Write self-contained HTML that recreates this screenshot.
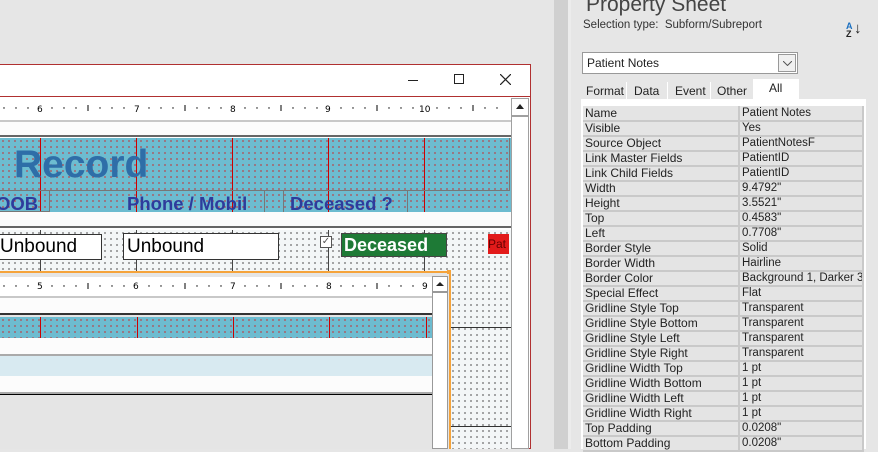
<!DOCTYPE html>
<html><head><meta charset="utf-8"><style>
*{margin:0;padding:0;box-sizing:border-box}
body{width:878px;height:449px;overflow:hidden;background:#e6e6e6;position:relative;font-family:"Liberation Sans",sans-serif}
.a{position:absolute}
.dotg{background-color:#f3f6f7;background-image:radial-gradient(#3a3a3a 0.6px,transparent 0.9px);background-size:6px 6px}
.dotr{background-color:#6dbcd0;background-image:radial-gradient(#d02020 0.6px,transparent 0.9px);background-size:6px 6px}
.vl{position:absolute;top:0;bottom:0;width:1px}
.ruler{background:#fff;font-size:9px;color:#000;border-bottom:2px solid #c8c8c8}
.ps{font-family:"Liberation Sans",sans-serif;font-size:12px;color:#222}
table{border-collapse:collapse}
td{height:15px;border:2px solid #c9c9c9;border-top:0;border-left:0;padding:0 2px;background:#e4e4e4;white-space:nowrap;overflow:hidden;line-height:13px}
td+td{padding:0 0 0 2px;font-size:11.5px}
</style></head><body>
<div class="a" style="left:0;top:64px;width:531px;height:385px;border:1px solid #b03030;border-left:0;background:#fff"></div>
<div class="a" style="left:0;top:65px;width:530px;height:32px;background:#fff;border-bottom:1px solid #b03030"></div>
<div class="a" style="left:408px;top:80px;width:10px;height:1px;background:#222"></div>
<div class="a" style="left:454px;top:74px;width:10px;height:10px;border:1px solid #222"></div>
<svg class="a" style="left:500px;top:74px" width="11" height="11"><path d="M0 0L11 11M11 0L0 11" stroke="#222" stroke-width="1.2"/></svg>
<div class="a ruler" style="left:0;top:98px;width:511px;height:24px">
<svg width="511" height="22" class="a" style="left:0;top:0">
<g fill="#000" font-size="9" font-family="DejaVu Sans">
<text x="37" y="14">6</text><text x="134" y="14">7</text><text x="230" y="14">8</text><text x="325" y="14">9</text><text x="419" y="14">10</text></g>
<g stroke="#000" stroke-width="1">
<path d="M88 7v6M185 7v6M281 7v6M377 7v6M473 7v6"/></g>
<g fill="#000"><circle cx="4" cy="10" r=".7"/><circle cx="16" cy="10" r=".7"/><circle cx="28" cy="10" r=".7"/><circle cx="52" cy="10" r=".7"/><circle cx="64" cy="10" r=".7"/><circle cx="76" cy="10" r=".7"/><circle cx="100" cy="10" r=".7"/><circle cx="112" cy="10" r=".7"/><circle cx="124" cy="10" r=".7"/><circle cx="149" cy="10" r=".7"/><circle cx="161" cy="10" r=".7"/><circle cx="173" cy="10" r=".7"/><circle cx="197" cy="10" r=".7"/><circle cx="209" cy="10" r=".7"/><circle cx="221" cy="10" r=".7"/><circle cx="245" cy="10" r=".7"/><circle cx="257" cy="10" r=".7"/><circle cx="269" cy="10" r=".7"/><circle cx="293" cy="10" r=".7"/><circle cx="305" cy="10" r=".7"/><circle cx="317" cy="10" r=".7"/><circle cx="341" cy="10" r=".7"/><circle cx="353" cy="10" r=".7"/><circle cx="365" cy="10" r=".7"/><circle cx="389" cy="10" r=".7"/><circle cx="401" cy="10" r=".7"/><circle cx="413" cy="10" r=".7"/><circle cx="437" cy="10" r=".7"/><circle cx="449" cy="10" r=".7"/><circle cx="461" cy="10" r=".7"/><circle cx="485" cy="10" r=".7"/><circle cx="497" cy="10" r=".7"/></g></svg></div>
<div class="a" style="left:511px;top:98px;width:18px;height:351px;background:#fff;border:1px solid #a0a0a0"></div>
<div class="a" style="left:512px;top:99px;width:16px;height:18px;border-bottom:2px solid #a0a0a0;background:#fff"></div>
<div class="a" style="left:516px;top:104px;width:0;height:0;border-left:4px solid transparent;border-right:4px solid transparent;border-bottom:5px solid #222"></div>
<div class="a" style="left:0;top:122px;width:511px;height:15px;background:#fcfcfc;border-bottom:2px solid #666"></div>
<div class="a dotr" style="left:0;top:138px;width:511px;height:74px">
<div class="vl" style="left:40px;background:#c00"></div><div class="vl" style="left:136px;background:#c00"></div><div class="vl" style="left:232px;background:#c00"></div><div class="vl" style="left:328px;background:#c00"></div><div class="vl" style="left:424px;background:#c00"></div>
<div class="a" style="left:0;top:0;width:510px;height:53px;border:1px solid #777;border-left:0;border-top:0"></div>
<div class="a" style="left:14px;top:5px;font-size:39px;font-weight:bold;color:#2e6ea8">Record</div>
<div class="a" style="left:0;top:52px;width:50px;height:22px;border:1px solid #777;border-left:0"></div>
<div class="a" style="left:125px;top:52px;width:140px;height:22px;border-right:1px solid #777"></div>
<div class="a" style="left:283px;top:52px;width:125px;height:22px;border:1px solid #777;border-top:0;border-bottom:0"></div>
<div class="a" style="left:-4px;top:55px;font-size:18.5px;font-weight:bold;color:#2e3c9c">OOB</div>
<div class="a" style="left:127px;top:55px;font-size:18.5px;font-weight:bold;color:#2e3c9c">Phone / Mobil</div>
<div class="a" style="left:290px;top:55px;font-size:18.5px;font-weight:bold;color:#2e3c9c">Deceased ?</div>
</div>
<div class="a" style="left:0;top:212px;width:511px;height:16px;background:#fcfcfc;border-bottom:2px solid #666"></div>
<div class="a dotg" style="left:0;top:230px;width:511px;height:219px">
<div class="vl" style="left:40px;background:#444"></div><div class="vl" style="left:136px;background:#444"></div><div class="vl" style="left:232px;background:#444"></div><div class="vl" style="left:328px;background:#444"></div><div class="vl" style="left:424px;background:#444"></div>
<div class="a" style="left:450px;top:97px;width:61px;height:1px;background:#333"></div>
<div class="a" style="left:450px;top:196px;width:61px;height:1px;background:#333"></div>
<div class="a" style="left:0;top:4px;width:102px;height:26px;background:#fff;border:1px solid #333;border-left:0;font-size:19px;line-height:24px;padding-left:0">Unbound</div>
<div class="a" style="left:123px;top:3px;width:156px;height:27px;background:#fff;border:1px solid #333;font-size:19px;line-height:25px;padding-left:3px">Unbound</div>
<div class="a" style="left:320px;top:6px;width:12px;height:12px;border:1px solid #555;background:#fff;font-size:10px;line-height:10px;text-align:center;color:#555">✓</div>
<div class="a" style="left:341px;top:3px;width:106px;height:24px;background:#1e7a36;border:1px solid #444;color:#fff;font-size:18px;font-weight:bold;line-height:22px;padding-left:2px">Deceased</div>
<div class="a" style="left:488px;top:4px;width:21px;height:20px;background:#e21a1a;color:#600;font-size:12px;line-height:20px;overflow:hidden">Pat</div>
</div>
<div class="a" style="left:0;top:271px;width:451px;height:178px;border:2px solid #f5a33a;border-left:0;border-bottom:0;background:#e5e5e5"></div>
<div class="a" style="left:447px;top:270px;width:4px;height:4px;background:#f5a33a"></div>
<div class="a ruler" style="left:0;top:277px;width:432px;height:21px">
<svg width="432" height="19" class="a"><g font-size="9" font-family="DejaVu Sans"><text x="37" y="12">5</text><text x="133" y="12">6</text><text x="230" y="12">7</text><text x="326" y="12">8</text><text x="422" y="12">9</text></g>
<path d="M88 6v6M185 6v6M281 6v6M377 6v6" stroke="#000"/>
<g fill="#000"><circle cx="4" cy="9" r=".7"/><circle cx="16" cy="9" r=".7"/><circle cx="28" cy="9" r=".7"/><circle cx="52" cy="9" r=".7"/><circle cx="64" cy="9" r=".7"/><circle cx="76" cy="9" r=".7"/><circle cx="100" cy="9" r=".7"/><circle cx="112" cy="9" r=".7"/><circle cx="124" cy="9" r=".7"/><circle cx="149" cy="9" r=".7"/><circle cx="161" cy="9" r=".7"/><circle cx="173" cy="9" r=".7"/><circle cx="197" cy="9" r=".7"/><circle cx="209" cy="9" r=".7"/><circle cx="221" cy="9" r=".7"/><circle cx="245" cy="9" r=".7"/><circle cx="257" cy="9" r=".7"/><circle cx="269" cy="9" r=".7"/><circle cx="293" cy="9" r=".7"/><circle cx="305" cy="9" r=".7"/><circle cx="317" cy="9" r=".7"/><circle cx="341" cy="9" r=".7"/><circle cx="353" cy="9" r=".7"/><circle cx="365" cy="9" r=".7"/><circle cx="389" cy="9" r=".7"/><circle cx="401" cy="9" r=".7"/><circle cx="413" cy="9" r=".7"/></g></svg></div>
<div class="a" style="left:0;top:298px;width:432px;height:17px;background:#fcfcfc;border-bottom:2px solid #333"></div>
<div class="a dotr" style="left:0;top:317px;width:432px;height:21px">
<div class="vl" style="left:40px;background:#c00"></div><div class="vl" style="left:137px;background:#c00"></div><div class="vl" style="left:233px;background:#c00"></div><div class="vl" style="left:329px;background:#c00"></div><div class="vl" style="left:426px;background:#c00"></div></div>
<div class="a" style="left:0;top:338px;width:432px;height:18px;background:#fcfcfc;border-bottom:2px solid #aaa"></div>
<div class="a" style="left:0;top:356px;width:432px;height:20px;background:#d8eaf1"></div>
<div class="a" style="left:0;top:376px;width:432px;height:18px;background:#fcfcfc;border-bottom:2px solid #aaa"></div>
<div class="a" style="left:0;top:394px;width:432px;height:1px;background:#000"></div>
<div class="a" style="left:432px;top:276px;width:16px;height:173px;background:#fff;border:1px solid #999"></div>
<div class="a" style="left:433px;top:277px;width:14px;height:16px;border-bottom:2px solid #999"></div>
<div class="a" style="left:436px;top:282px;width:0;height:0;border-left:4px solid transparent;border-right:4px solid transparent;border-bottom:4px solid #222"></div>
<div class="a" style="left:554px;top:0;width:14px;height:449px;background:#d0d0d0"></div>
<div class="a" style="left:568px;top:0;width:3px;height:449px;background:#ececec"></div>
<div class="a ps" style="left:586px;top:-7px;font-size:21px;color:#444">Property Sheet</div>
<div class="a ps" style="left:583px;top:19px;font-size:11.5px;color:#333">Selection type:&nbsp; Subform/Subreport</div>
<div class="a ps" style="left:846px;top:22px;font-size:9px;line-height:8px;color:#1a6fc0;font-weight:bold">A<br><span style="color:#222">Z</span></div>
<div class="a ps" style="left:854px;top:20px;font-size:15px;color:#222">↓</div>
<div class="a ps" style="left:582px;top:52px;width:216px;height:22px;background:#fff;border:1px solid #999;padding:3px 0 0 4px">Patient Notes</div>
<div class="a" style="left:778px;top:54px;width:18px;height:18px;border:1px solid #999;background:#f0f0f0"></div>
<svg class="a" style="left:783px;top:61px" width="9" height="5"><path d="M0 0L4.5 4.5L9 0" stroke="#555" fill="none"/></svg>
<div class="a ps" style="left:583px;top:82px;width:44px;height:17px;padding:2px 0 0 3px;border-right:1px solid #fff">Format</div>
<div class="a ps" style="left:627px;top:82px;width:41px;height:17px;padding:2px 0 0 7px;border-right:1px solid #fff">Data</div>
<div class="a ps" style="left:668px;top:82px;width:43px;height:17px;padding:2px 0 0 7px;border-right:1px solid #fff">Event</div>
<div class="a ps" style="left:711px;top:82px;width:42px;height:17px;padding:2px 0 0 6px">Other</div>
<div class="a ps" style="left:753px;top:79px;width:46px;height:22px;background:#fff;padding:2px 0 0 16px">All</div>
<div class="a" style="left:581px;top:99px;width:285px;height:350px;background:#fff"></div>
<table class="a ps" style="left:583px;top:106px;width:280px;table-layout:fixed">
<col style="width:156px"><col style="width:124px">
<tr><td>Name</td><td>Patient Notes</td></tr>
<tr><td>Visible</td><td>Yes</td></tr>
<tr><td>Source Object</td><td>PatientNotesF</td></tr>
<tr><td>Link Master Fields</td><td>PatientID</td></tr>
<tr><td>Link Child Fields</td><td>PatientID</td></tr>
<tr><td>Width</td><td>9.4792"</td></tr>
<tr><td>Height</td><td>3.5521"</td></tr>
<tr><td>Top</td><td>0.4583"</td></tr>
<tr><td>Left</td><td>0.7708"</td></tr>
<tr><td>Border Style</td><td>Solid</td></tr>
<tr><td>Border Width</td><td>Hairline</td></tr>
<tr><td>Border Color</td><td>Background 1, Darker 3</td></tr>
<tr><td>Special Effect</td><td>Flat</td></tr>
<tr><td>Gridline Style Top</td><td>Transparent</td></tr>
<tr><td>Gridline Style Bottom</td><td>Transparent</td></tr>
<tr><td>Gridline Style Left</td><td>Transparent</td></tr>
<tr><td>Gridline Style Right</td><td>Transparent</td></tr>
<tr><td>Gridline Width Top</td><td>1 pt</td></tr>
<tr><td>Gridline Width Bottom</td><td>1 pt</td></tr>
<tr><td>Gridline Width Left</td><td>1 pt</td></tr>
<tr><td>Gridline Width Right</td><td>1 pt</td></tr>
<tr><td>Top Padding</td><td>0.0208"</td></tr>
<tr><td>Bottom Padding</td><td>0.0208"</td></tr>
</table>
<div class="a" style="left:866px;top:99px;width:12px;height:350px;background:#e6e6e6"></div>
</body></html>
